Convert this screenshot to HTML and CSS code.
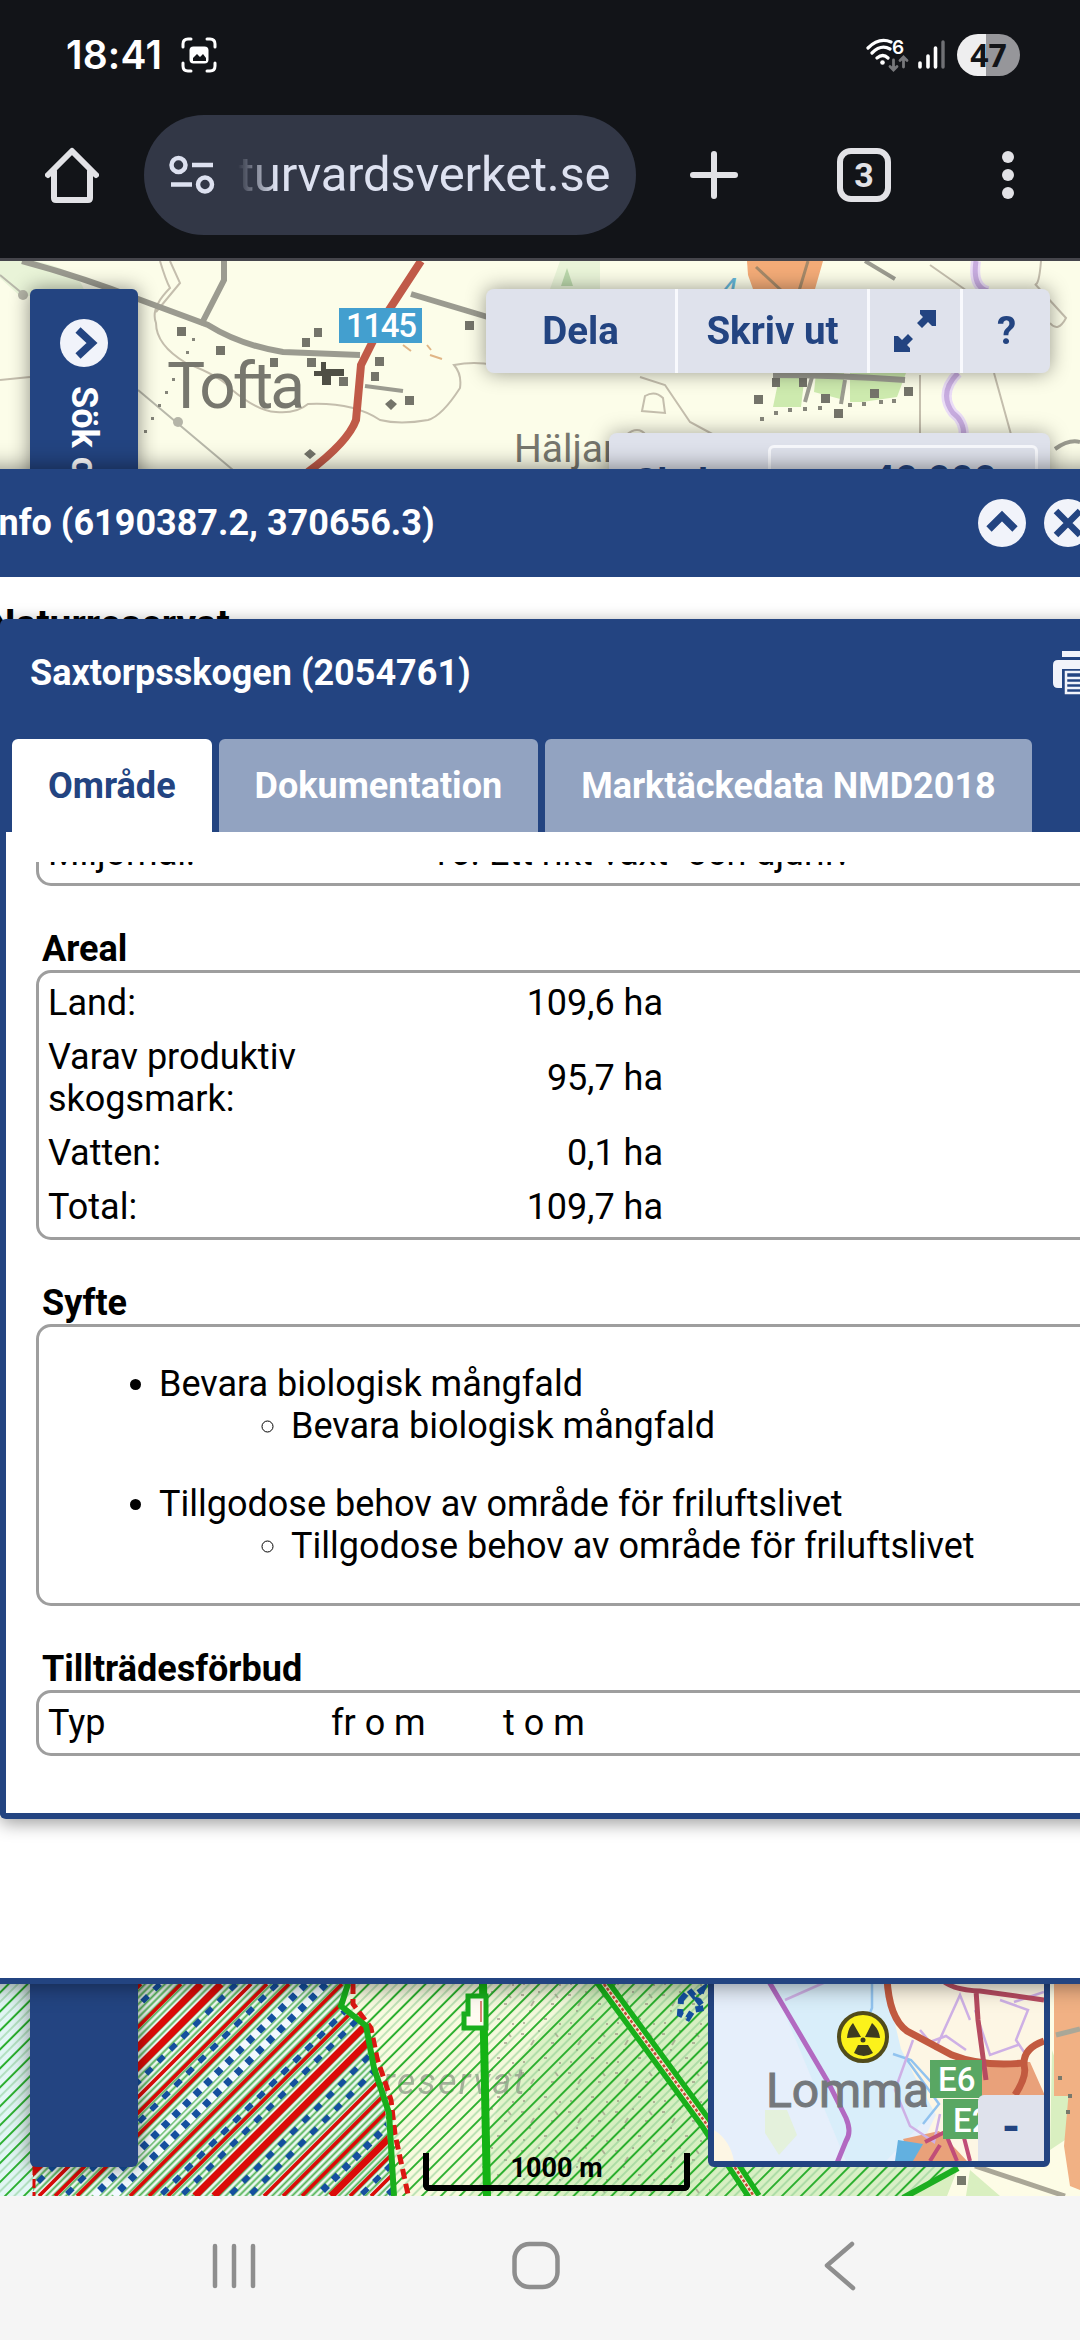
FILE: index.html
```html
<!DOCTYPE html>
<html lang="sv">
<head>
    <meta charset="UTF-8">
    <meta name="viewport" content="width=device-width, initial-scale=1.0">
    <title>Skyddad natur</title>
    <link rel="stylesheet" href="styles.css">
</head>
<body>
    <div class="statusbar">
        <span class="clock">18:41</span>
        <svg class="shot" width="36" height="36" viewBox="0 0 36 36" fill="none" stroke="#fff" stroke-width="3" stroke-linecap="round">
            <path d="M2 10V7q0-5 5-5h3M26 2h3q5 0 5 5v3M34 26v3q0 5-5 5h-3M10 34H7q-5 0-5-5v-3"/>
            <rect x="8.500" y="9.500" width="19" height="17" rx="4" fill="#fff" stroke="none"/>
            <path d="M12 24v-3l4-4 3 3 3-3 3 4v3z" fill="#121418" stroke="none"/>
        </svg>
        <svg class="wifi" width="80" height="42" viewBox="0 0 80 42" fill="none" stroke="#fff" stroke-width="3.200" stroke-linecap="round">
            <path d="M2 14Q13 3 25 8M6 19Q15 10 24 15M11 24q6-5 11 0"/>
            <circle cx="16.500" cy="28.500" r="2.300" fill="#fff" stroke="none"/>
            <text class="wifi-gen" x="26" y="20">6</text>
            <path d="M27.500 26v9M24 32.500l3.500 3.500 3.500-3.500M37.500 33v-9M34 26.500l3.500-3.500 3.500 3.500" stroke="#77787b" stroke-width="2.800"/>
            <path d="M54 29v4M62 22v11M69.500 14v19" stroke-width="3.600"/>
            <path d="M77 8v25" stroke="#707175" stroke-width="3.400"/>
        </svg>
        <span class="battery">47</span>
    </div>

    <div class="browserbar">
        <svg class="home" width="54" height="56" viewBox="0 0 54 56" fill="none" stroke="#e2e2e6" stroke-width="6" stroke-linecap="round" stroke-linejoin="round">
            <path d="M3 28L27 4l24 24M9 24v27q0 2 2 2h32q2 0 2-2V24"/>
        </svg>
        <div class="urlbox">
            <svg width="46" height="40" viewBox="0 0 46 40" fill="none" stroke="#dde1f0" stroke-width="4.500">
                <circle cx="9.500" cy="10" r="7"/><path d="M23 10h21M2 29.500h21"/><circle cx="36" cy="29.500" r="7"/>
            </svg>
            <span class="url">turvardsverket.se</span>
        </div>
        <svg class="plus" width="50" height="50" viewBox="0 0 50 50" stroke="#e2e2e6" stroke-width="6" stroke-linecap="round"><path d="M25 4v42M4 25h42"/></svg>
        <span class="tabcount">3</span>
        <svg class="dots" width="14" height="50" viewBox="0 0 14 50" fill="#e2e2e6"><circle cx="7" cy="7" r="6"/><circle cx="7" cy="25" r="6"/><circle cx="7" cy="43" r="6"/></svg>
    </div>

    <main class="map">
        <svg class="layer" width="1080" height="1935" viewBox="0 261 1080 1935">
            <defs>
                <pattern id="reserve" width="13.400" height="13.400" patternUnits="userSpaceOnUse" patternTransform="rotate(45)">
                    <path d="M2 0v13.400" stroke="#22ab26" stroke-width="1.900"/>
                    <path d="M8.500 0v13.400" stroke="#7cc885" stroke-width="1.900" opacity=".5"/>
                </pattern>
                <pattern id="fine" width="4.700" height="4.700" patternUnits="userSpaceOnUse" patternTransform="rotate(45)">
                    <path d="M1.500 0v4.700" stroke="#55b558" stroke-width="1.900"/>
                </pattern>
                <pattern id="specks" width="47" height="39" patternUnits="userSpaceOnUse">
                    <path d="M4 6h3M21 3h2M34 15h3M12 22h2M27 30h3M42 35h2M6 34h2M38 5l3 4M17 12l-3 5" stroke="#8b7f72" stroke-width="2" opacity=".55"/>
                </pattern>
                <linearGradient id="ground" x1="0" x2="1">
                    <stop offset="0" stop-color="#fbfbe2"/><stop offset=".35" stop-color="#d6efbf"/><stop offset="1" stop-color="#dcf0cb"/>
                </linearGradient>
                <clipPath id="birds"><path d="M33 1984H345l-3 24 25 22 18 78 8 88H33z"/></clipPath>
            </defs>

            <!-- upper part of the map -->
            <rect y="261" width="1080" height="220" fill="#fcfde9"/>
            <path d="M0 261h35q50 10 50 35H20L0 278zM560 261h40v28h-50z" fill="#e9f4d8"/>
            <path d="M747 261h76l-8 28h-62l-5-14z" fill="#f3ab77"/>
            <path d="M756 267l26 24M808 261l-9 30" fill="none" stroke="#a58969" stroke-width="3"/>
            <path d="M780 373h25l-4 34h-28zM816 373h28v27l-30-8zM850 373h56l-9 24-35 5h-12z" fill="#cdeaae"/>
            <g fill="none" stroke="#c4bead" stroke-width="2">
                <path d="M160 261q6 20 10 27-20 20-14 35 0 22 30 40M170 261l10 22-24 29M186 363q36 14 45 26 26 22 45 23 20 2 32-8 45-2 72 16 20 5 48 0 14-4 32-32 2-14-6-23 20-4 40 0M0 380l30-3M640 377l25 8 25 37 26 14M642 411l3-15q10-6 18 2l2 15zM626 435q12-10 20 0M1041 261q-2 25-6 23l31 34q-8 15-16 5M930 265l40 28M994 373l18 65M920 375v62"/>
            </g>
            <path d="M976 261q-4 26 12 30M958 373q-20 20-5 40 14 10 10 32" fill="none" stroke="#eadcf6" stroke-width="10"/>
            <path d="M976 261q-4 26 12 30M958 373q-20 20-5 40 14 10 10 32" fill="none" stroke="#c7acdf" stroke-width="5"/>
            <g fill="none" stroke="#9b9b90">
                <path d="M22 261q60 16 116 38l70 26q32 20 75 27l77 3" stroke-width="6"/>
                <path d="M224 261v19l-23 45M411 294l80 24M773 375q60 0 132 5" stroke-width="6"/>
                <path d="M812 377l-7 25M845 380l-4 24M865 261l30 18M1055 449q14-10 25-7M365 386l38 5" stroke-width="4"/>
                <path d="M0 275l23 19M138 390l95 80" stroke-width="2" stroke="#b8b8aa"/>
            </g>
            <path d="M421 261l-34 52-26 52-5 55q-8 22-48 52" fill="none" stroke="#c05a48" stroke-width="8"/>
            <path d="M177 327h9v9h-9zM216 346h9v9h-9zM270 358h8v9h-8zM302 338h8v9h-8zM314 328h8v9h-8zM307 358h9v9h-9zM339 377h9v9h-9zM375 357h9v9h-9zM371 372h8v9h-8zM405 396h9v9h-9zM465 321h9v9h-9zM754 395h9v9h-9zM772 378h8v9h-8zM799 378h8v9h-8zM821 394h9v9h-9zM834 409h9v9h-9zM870 389h9v9h-9zM904 387h9v9h-9z" fill="#74746a"/>
            <path d="M391 399l6 5-6 6-6-6zM310 449l6 5-6 5-6-5z" fill="#74746a"/>
            <path d="M321 362h5v7h18v7h-13v9h-9v-9h-8v-5h7z" fill="#4f4f45"/>
            <path d="M192 338h3v3h-3zM186 351h3v3h-3zM172 378h3v3h-3zM165 391h3v3h-3zM158 404h3v3h-3zM151 417h3v3h-3zM144 430h3v3h-3zM760 417h4v4h-4zM774 411h4v4h-4zM788 408h4v4h-4zM803 407h4v4h-4zM818 406h4v4h-4zM848 403h4v4h-4zM862 402h4v4h-4zM879 400h4v4h-4zM892 399h4v4h-4z" fill="#85857a"/>
            <circle cx="23" cy="295" r="5" fill="#b5b5a8"/><circle cx="178" cy="422" r="5" fill="#b5b5a8"/>
            <path d="M403 345l8 6M427 345l4 5M430 355l12 4" stroke="#e0b585" stroke-width="2"/>
            <path d="M567 268l6 18h-12z" fill="#bad7ab"/>
            <text class="water" x="720" y="300">4</text>
            <rect x="339" y="308" width="83" height="35" fill="#439fcf"/>
            <text class="roadno" x="346" y="337" textLength="71">1145</text>
            <text class="place" x="167" y="408" textLength="138">Tofta</text>
            <text class="hamlet" x="514" y="462">Häljarp</text>

            <!-- lower part of the map with protected areas -->
            <rect y="1978" width="1080" height="218" fill="#e2f6f5"/>
            <rect x="345" y="1978" width="700" height="218" fill="url(#ground)"/>
            <path d="M340 1978h250l-80 90-40 128H395z" fill="#fbfbe2" opacity=".75"/>
            <rect x="480" y="1984" width="230" height="212" fill="url(#specks)"/>
            <text class="nature" x="383" y="2094" textLength="142">reservat</text>
            <path d="M0 1978h1050v150l-92 40-53 28H0z" fill="url(#reserve)"/>
            <g clip-path="url(#birds)">
                <rect x="33" y="1984" width="370" height="212" fill="#eff8f4"/>
                <rect x="33" y="1984" width="370" height="212" fill="url(#fine)"/>
                <g fill="none" stroke="#f2f9ff" stroke-width="7"><path d="M306 1984l-212 212M326 1984l-212 212"/></g>
                <g fill="none" stroke="#15509f">
                    <path d="M306 1984l-212 212M326 1984l-212 212M529 1984l-212 212" stroke-width="7" stroke-dasharray="7 8"/>
                    <path d="M121 1984l-212 212M160 1984l-212 212M236 1984l-212 212M277 1984l-212 212M372 1984l-212 212M393 1984l-212 212M441 1984l-212 212M461 1984l-212 212M572 1984l-212 212M598 1984l-212 212" stroke-width="5.500" stroke-dasharray="8 9"/>
                </g>
                <g fill="none" stroke="#db0b08">
                    <path d="M201 1984l-212 212M221 1984l-212 212M407 1984l-212 212M426 1984l-212 212M543 1984l-212 212" stroke-width="7"/>
                    <path d="M141 1984l-212 212M181 1984l-212 212M251 1984l-212 212M267 1984l-212 212M289 1984l-212 212M342 1984l-212 212M361 1984l-212 212M380 1984l-212 212M476 1984l-212 212M495 1984l-212 212M514 1984l-212 212M562 1984l-212 212M583 1984l-212 212" stroke-width="3.600"/>
                </g>
            </g>
            <path d="M34 2166v30" stroke="#db0b08" stroke-width="3" stroke-dasharray="9 4"/>
            <path d="M353 1984v20l18 24 6 30 14 42 4 34 14 65" fill="none" stroke="#db1712" stroke-width="5" stroke-dasharray="10 5"/>
            <path d="M348 1984l-7 22 25 20 8 42 15 45 5 83" fill="none" stroke="#19ae1c" stroke-width="6"/>
            <path d="M483 1984l4 212" stroke="#14b314" stroke-width="8"/>
            <path d="M468 1996h18v32h-22v-14h4z" fill="#fffbf1" stroke="#19ae1c" stroke-width="5"/>
            <path d="M481 2001v21" stroke="#d98474" stroke-width="2"/>
            <path d="M601 1980l104 142 50 76" fill="none" stroke="#18b01b" stroke-width="15"/>
            <path d="M601 1980l104 142 50 76" fill="none" stroke="#f5ead0" stroke-width="4"/>
            <path d="M601 1980l104 142 50 76" fill="none" stroke="#c44b34" stroke-width="2.500" stroke-dasharray="3 2"/>
            <path d="M681 2000l8-10 5 6 8-6-4 10 6 8-11 2-5 8-8-4z" fill="none" stroke="#15509f" stroke-width="6" stroke-dasharray="8 5"/>
            <path d="M958 2168l22-2 70-182h30v212H905z" fill="#fdfce6"/>
            <path d="M958 2168l-53 28h42zM970 2170l30 26h-34zM1052 2050l28 80-30 20z" fill="#d9efc0"/>
            <path d="M1054 1984h26v112h-26zM1080 2060v130l-10-4-6-40 8-90z" fill="#f1b184"/>
            <path d="M1056 2035l24-6M975 2166l90 30" fill="none" stroke="#aaa797" stroke-width="5"/>
            <path d="M958 2168l-55 30" stroke="#1cae20" stroke-width="6"/>
            <path d="M957 2176h9v9h-9zM1058 2076h4v4h-4zM1068 2094h4v4h-4zM1066 2110h4v4h-4z" fill="#77796c"/>
        </svg>

        <aside class="searchpanel">
            <svg width="48" height="48" viewBox="0 0 48 48"><circle cx="24" cy="24" r="24" fill="#f1f3fa"/><path d="M18 11l14 13-14 13" fill="none" stroke="#234481" stroke-width="7.500"/></svg>
            <span>Sök områden</span>
        </aside>

        <div class="toolbar">
            <span class="tool dela">Dela</span>
            <span class="tool skriv">Skriv ut</span>
            <span class="tool full">
                <svg width="44" height="44" viewBox="0 0 44 44" fill="#234481"><path d="M27 1h16v16h-4l-4-4-6 6-5-5 6-6-3-3zM1 43V27h4l4 4 6-6 5 5-6 6 3 3v4z"/></svg>
            </span>
            <span class="tool help">?</span>
        </div>

        <div class="scalebox">
            <span class="scalelabel">Skala:</span>
            <span class="scalevalue">40 000</span>
        </div>

        <div class="scaleline">1000 m</div>

        <div class="minimap">
            <svg width="330" height="183" viewBox="714 1978 330 183">
                <path d="M714 1978h330v183H714z" fill="#e6effb"/>
                <path d="M770 1978h130l36 130-50 53h-40z" fill="#d9eefa"/>
                <path d="M714 2130q16 10 20 31h-20zM884 1978h160v183H938l-14-22 12-24-22-40-13-26z" fill="#fdf6e4"/>
                <path d="M765 2110h22l10 25-18 20-14-22z" fill="#e4f1dc"/>
                <path d="M903 2139l36-8 28 30h-54zM980 2062h50l16 36h-70z" fill="#e9a17a"/>
                <path d="M898 2140l25 4-10 17h-18z" fill="#62b0e0"/>
                <path d="M872 1978v30l-5 12M893 2054l18 6 20 22M905 2057l34 47-16 20" fill="none" stroke="#91c3ef" stroke-width="2.500"/>
                <path d="M785 2000l45-20M935 2050l25-55 10 25M913 2040l-18 50 15 36 24 16 6-28M975 2010l15 45 28-10M1000 2000l28 10-12 30 10 15M920 2030l10 12 16-6 20 14M1044 1992l-30 10" fill="none" stroke="#ceb0e5" stroke-width="2.500"/>
                <path d="M768 1980l60 102 18 36q6 14 0 23l-9 22" fill="none" stroke="#b269c1" stroke-width="5"/>
                <path d="M887 1978q2 40 20 53l45 24q30 12 72 8 0-15 20-22M1023 2063q6 10-8 32" fill="none" stroke="#c25a40" stroke-width="7"/>
                <path d="M940 1978q10 12 40 13l64 9M976 1990l2 30 8 60" fill="none" stroke="#b64b60" stroke-width="5"/>
                <path d="M925 2142l20-10 12 29M962 2130l8 31M930 2161l10-16" fill="none" stroke="#c04d78" stroke-width="4"/>
                <rect x="930" y="2060" width="52" height="38" fill="#59a763"/>
                <rect x="943" y="2099" width="50" height="40" fill="#59a763"/>
                <text class="euro" x="938" y="2091">E6</text>
                <text class="euro" x="953" y="2132">E2</text>
                <text class="town" x="766" y="2107" textLength="163">Lomma</text>
                <circle cx="863" cy="2037" r="24" fill="#fbf21b" stroke="#514b1b" stroke-width="4"/>
                <path d="M847 2038q1-10 6-15l8 14zM865 2037l7-14q7 6 8 15zM858 2045h10l5 8q-9 6-19 0z" fill="#3d3b20"/>
                <circle cx="863" cy="2040" r="2.500" fill="#3d3b20"/>
            </svg>
            <span class="minimize">-</span>
        </div>

        <section class="window info">
            <header class="titlebar">
                <h2>Info (6190387.2, 370656.3)</h2>
                <svg width="48" height="48" viewBox="0 0 48 48"><circle cx="24" cy="24" r="24" fill="#f1f3fa"/><path d="M11 30l13-13 13 13" fill="none" stroke="#234481" stroke-width="7.500"/></svg>
                <svg width="48" height="48" viewBox="0 0 48 48"><circle cx="24" cy="24" r="24" fill="#f1f3fa"/><path d="M12 12l24 24M36 12L12 36" fill="none" stroke="#234481" stroke-width="6.500"/></svg>
            </header>
            <p class="group">Naturreservat</p>
        </section>

        <section class="window area">
            <header class="titlebar">
                <h2>Saxtorpsskogen (2054761)</h2>
                <svg width="54" height="46" viewBox="0 0 54 46">
                    <path d="M9 1h36v6H9zM5 10h44q5 0 5 5v18q0 5-5 5h-4V19H9v19H5q-5 0-5-5V15q0-5 5-5z" fill="#f1f3fa"/>
                    <path d="M13 22v21h28V22zM13 28h28M13 33h28M13 38h28" fill="none" stroke="#f1f3fa" stroke-width="2.500"/>
                </svg>
            </header>
            <nav class="tabs">
                <span class="tab active">Område</span>
                <span class="tab">Dokumentation</span>
                <span class="tab">Marktäckedata NMD2018</span>
            </nav>
            <div class="content">
                <div class="box cut">
                    <div class="row"><span class="label">Miljömål:</span><span class="goal">16. Ett rikt växt- och djurliv</span></div>
                </div>

                <h3>Areal</h3>
                <div class="box">
                    <div class="row"><span class="label">Land:</span><span class="value">109,6 ha</span></div>
                    <div class="row"><span class="label">Varav produktiv skogsmark:</span><span class="value">95,7 ha</span></div>
                    <div class="row"><span class="label">Vatten:</span><span class="value">0,1 ha</span></div>
                    <div class="row"><span class="label">Total:</span><span class="value">109,7 ha</span></div>
                </div>

                <h3>Syfte</h3>
                <div class="box purpose">
                    <ul>
                        <li>Bevara biologisk mångfald
                            <ul><li>Bevara biologisk mångfald</li></ul>
                        </li>
                        <li>Tillgodose behov av område för friluftslivet
                            <ul><li>Tillgodose behov av område för friluftslivet</li></ul>
                        </li>
                    </ul>
                </div>

                <h3>Tillträdesförbud</h3>
                <div class="box">
                    <div class="row ban"><span>Typ</span><span>fr o m</span><span>t o m</span></div>
                </div>
            </div>
        </section>
    </main>

    <footer class="navkeys">
        <svg width="1080" height="144" viewBox="0 0 1080 144" fill="none" stroke="#8e8e8e" stroke-width="4.500" stroke-linecap="round" stroke-linejoin="round">
            <path d="M215 50v40M234 50v40M253 50v40"/>
            <rect x="514.500" y="48" width="43" height="43" rx="15"/>
            <path d="M852 48l-25 21.500L853 92"/>
        </svg>
    </footer>
</body>
</html>
```

FILE: styles.css
```css
/* General Styles */
* {
    box-sizing: border-box;
}

body {
    font-family: Roboto, "Liberation Sans", sans-serif;
    font-size: 36px;
    line-height: 42px;
    margin: 0;
    width: 1080px;
    height: 2340px;
    overflow: hidden;
    display: flex;
    flex-direction: column;
    background-color: #121418;
    color: #000;
}

svg {
    display: block;
    flex: none;
}

h2, h3, p {
    margin: 0;
    font-size: inherit;
    font-weight: bold;
}

/* Phone status bar */
.statusbar {
    height: 110px;
    flex: none;
    display: flex;
    align-items: center;
    padding: 0 60px 0 66px;
}

.clock {
    width: 97px;
    color: #fff;
    font-family: Inter, sans-serif;
    font-size: 39px;
    font-weight: 600;
    letter-spacing: 0.2px;
    white-space: nowrap;
}

.shot {
    margin-left: 18px;
}

.wifi {
    margin-left: auto;
    margin-right: 11px;
}

.wifi-gen {
    font-family: Inter, sans-serif;
    font-size: 19px;
    font-weight: 600;
    fill: #fff;
    stroke: none;
}

.battery {
    width: 63px;
    height: 42px;
    border-radius: 21px;
    background: linear-gradient(90deg, #eeeeef 46%, #96969a 46%);
    color: #121418;
    font-family: "Open Sans", sans-serif;
    font-size: 32px;
    font-weight: 700;
    text-align: center;
}

/* Browser toolbar */
.browserbar {
    height: 151px;
    flex: none;
    display: flex;
    align-items: center;
    padding: 0 65px 19px 45px;
    border-bottom: 3px solid #45454b;
}

.urlbox {
    width: 492px;
    height: 120px;
    margin-left: 45px;
    padding: 0 24px 0 25px;
    border-radius: 60px;
    background-color: #323746;
    display: flex;
    align-items: center;
    justify-content: space-between;
}

.url {
    width: 374px;
    color: #dde1f0;
    font-size: 49px;
    line-height: 60px;
    letter-spacing: -0.2px;
    white-space: nowrap;
    -webkit-mask-image: linear-gradient(90deg, transparent, #000 38px);
    mask-image: linear-gradient(90deg, transparent, #000 38px);
}

.plus {
    margin-left: 53px;
}

.tabcount {
    width: 54px;
    height: 54px;
    margin-left: 98px;
    border: 6px solid #e2e2e6;
    border-radius: 14px;
    color: #e2e2e6;
    font-size: 34px;
    font-weight: 700;
    text-align: center;
}

.dots {
    margin-left: auto;
}

/* Map */
.map {
    position: relative;
    flex: 1;
    overflow: hidden;
}

.layer {
    position: absolute;
    left: 0;
    top: 0;
}

.place, .town, .hamlet {
    fill: #77776e;
    font-size: 64px;
}

.hamlet {
    font-size: 39px;
}

.town {
    font-size: 48px;
    fill: #74787c;
    stroke: #74787c;
}

.roadno {
    fill: #fff;
    font-size: 33px;
    font-weight: 500;
}

.water {
    fill: #65b6d8;
    font-size: 32px;
    font-style: italic;
}

.nature {
    fill: #8d9484;
    font-size: 36px;
    font-style: italic;
    opacity: .75;
}

.euro {
    fill: #fff;
    font-size: 33px;
    font-weight: 500;
}

.searchpanel {
    position: absolute;
    left: 30px;
    top: 28px;
    width: 108px;
    height: 1878px;
    padding-top: 30px;
    border-radius: 6px;
    background-color: #234481;
    box-shadow: 0 0 20px rgba(0, 0, 0, 0.45);
    display: flex;
    flex-direction: column;
    align-items: center;
    gap: 19px;
    color: #fff;
    font-weight: bold;
}

.searchpanel span {
    writing-mode: vertical-rl;
}

.toolbar {
    position: absolute;
    right: 30px;
    top: 28px;
    width: 564px;
    height: 84px;
    display: flex;
    border-radius: 8px;
    overflow: hidden;
    background-color: #dfe2ec;
    color: #234481;
    font-size: 38.500px;
    font-weight: bold;
    filter: drop-shadow(0 0 10px rgba(0, 0, 0, 0.4));
}

.tool {
    display: flex;
    align-items: center;
    justify-content: center;
    border-right: 3px solid #f8f9fd;
}

.dela {
    width: 192px;
}

.skriv {
    width: 192px;
}

.full {
    width: 93px;
}

.help {
    flex: 1;
    border-right: 0;
}

.scalebox {
    position: absolute;
    right: 30px;
    top: 172px;
    width: 441px;
    height: 108px;
    padding: 12px 12px 12px 25px;
    display: flex;
    justify-content: space-between;
    align-items: center;
    border-radius: 8px;
    background-color: #dfe2ec;
    box-shadow: 0 0 20px rgba(0, 0, 0, 0.35);
    color: #234481;
    font-size: 38px;
    font-weight: bold;
}

.scalelabel {
    padding-bottom: 8px;
}

.scalevalue {
    width: 270px;
    height: 84px;
    padding-left: 101px;
    border: 3px solid #f8f9fd;
    border-radius: 6px;
    font-size: 40px;
    line-height: 66px;
}

.scaleline {
    position: absolute;
    left: 423px;
    bottom: 5px;
    width: 267px;
    height: 38px;
    border: 6px solid #000;
    border-top: 0;
    border-radius: 0 0 6px 6px;
    font-size: 27px;
    font-weight: bold;
    line-height: 31px;
    text-align: center;
}

.minimap {
    position: absolute;
    right: 30px;
    bottom: 29px;
    width: 342px;
    height: 195px;
    border: 6px solid #234481;
    border-radius: 6px;
    background-color: #fff;
}

.minimize {
    position: absolute;
    right: 0;
    bottom: 0;
    width: 66px;
    height: 66px;
    border-radius: 6px 0 0 0;
    background-color: #dfe2ec;
    color: #234481;
    font-size: 46px;
    font-weight: bold;
    line-height: 64px;
    text-align: center;
}

/* Windows */
.window {
    position: absolute;
    background-color: #fff;
    border: 6px solid #234481;
    border-top: 0;
    border-radius: 6px;
    box-shadow: 0 0 24px rgba(0, 0, 0, 0.5);
}

.titlebar {
    height: 108px;
    display: flex;
    align-items: center;
    gap: 18px;
    background-color: #234481;
    color: #fff;
}

.titlebar h2 {
    flex: 1;
    white-space: nowrap;
}

.info {
    left: -42px;
    top: 208px;
    width: 1164px;
    height: 1515px;
}

.info .titlebar {
    padding: 0 24px;
}

.group {
    padding: 26px 24px;
    font-size: 39px;
}

.area {
    left: 0;
    top: 358px;
    width: 1250px;
    height: 1200px;
    box-shadow: 0 4px 18px rgba(0, 0, 0, 0.4);
}

.area .titlebar {
    padding: 0 137px 0 24px;
}

.tabs {
    display: flex;
    align-items: flex-end;
    gap: 7px;
    height: 105px;
    padding-left: 6px;
    background-color: #234481;
}

.tab {
    height: 93px;
    padding: 26px 36px 0;
    border-radius: 6px 6px 0 0;
    background-color: #92a3c1;
    color: #fff;
    font-weight: bold;
    white-space: nowrap;
}

.tab.active {
    background-color: #fff;
    color: #234481;
}

.content {
    height: 951px;
    margin-top: 30px;
    padding-left: 30px;
    overflow: hidden;
}

.content h3 {
    margin-top: 42px;
    padding-left: 6px;
    height: 42px;
}

.box {
    padding: 3px;
    border: 3px solid #9e9e9e;
    border-radius: 15px;
}

.box.cut {
    height: 66px;
    margin-top: -42px;
}

.row {
    display: flex;
    align-items: center;
    padding: 6px;
}

.label {
    width: 300px;
}

.value {
    width: 315px;
    text-align: right;
}

.goal {
    padding-left: 82px;
}

.ban span:nth-child(1) {
    width: 283px;
}

.ban span:nth-child(2) {
    width: 172px;
}

.purpose {
    padding: 0;
}

.purpose ul {
    margin: 36px 0;
    padding-left: 120px;
}

.purpose ul ul {
    margin: 0 0 36px;
    padding-left: 132px;
}

/* Phone navigation keys */
.navkeys {
    height: 144px;
    flex: none;
    background-color: #f5f5f5;
}
```
